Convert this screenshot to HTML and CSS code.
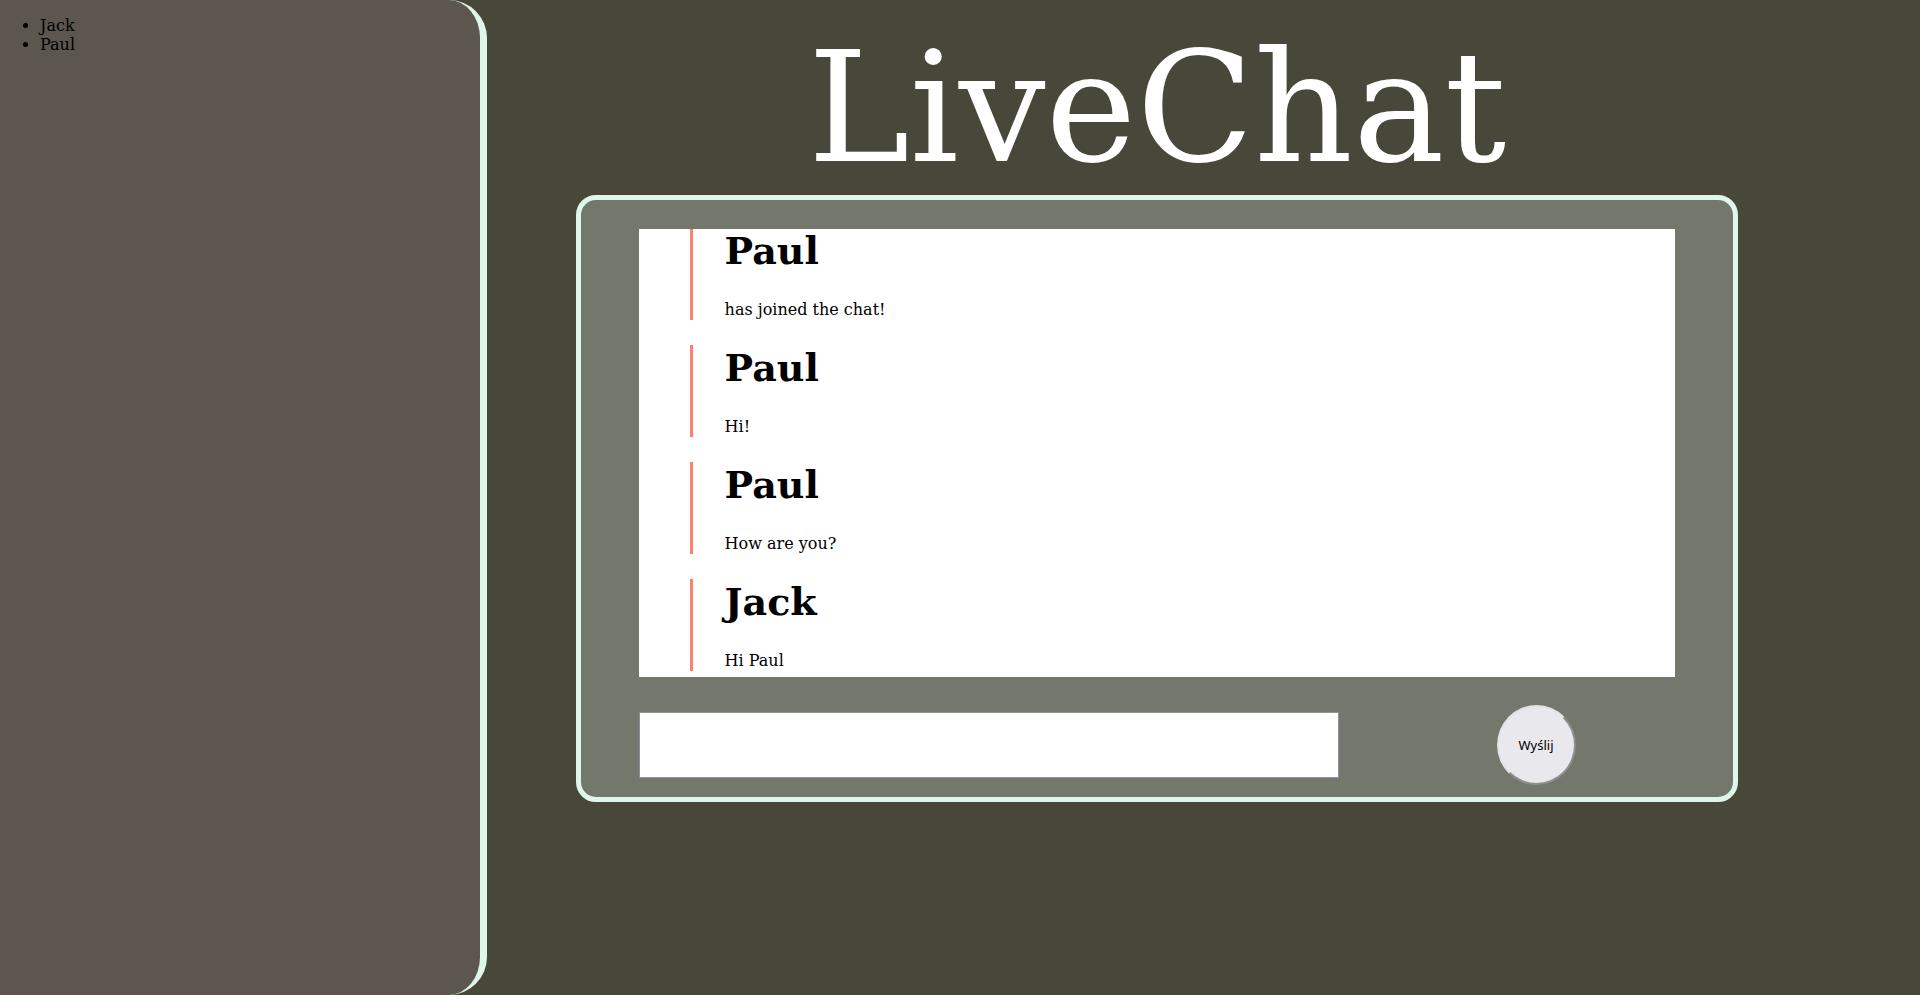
FILE: index.html
```html
<!DOCTYPE html>
<html lang="pl">
<head>
<meta charset="utf-8">
<title>LiveChat</title>
<link rel="stylesheet" href="styles.css">
</head>
<body>
<aside class="sidebar">
  <ul class="users">
    <li>Jack</li>
    <li>Paul</li>
  </ul>
</aside>
<main class="main">
  <header class="title">LiveChat</header>
  <section class="chat">
    <div class="messages">
      <article class="message"><h1>Paul</h1><p>has joined the chat!</p></article>
      <article class="message"><h1>Paul</h1><p>Hi!</p></article>
      <article class="message"><h1>Paul</h1><p>How are you?</p></article>
      <article class="message"><h1>Jack</h1><p>Hi Paul</p></article>
    </div>
    <form class="composer">
      <input class="field" type="text" aria-label="Wiadomość">
      <div class="actions"><button class="send" type="button">Wyślij</button></div>
    </form>
  </section>
</main>
</body>
</html>
```

FILE: styles.css
```css
* {
  box-sizing: border-box;
}

body {
  margin: 0;
  min-height: 100vh;
  display: flex;
  background: #48483a;
  color: #000;
  font: 16px/19px "DejaVu Serif", serif;
}

.sidebar {
  flex: none;
  width: calc(25% + 7px);
  background: #5c564f;
  border-right: 7px solid #dff7ea;
  border-radius: 0 38px 38px 0;
}

.users {
  margin: 16px 0;
  padding-left: 40px;
}

.main {
  flex: 1;
  min-width: 0;
  padding: 20px 182px 16px 89px;
}

.title {
  color: #fff;
  font-size: 8vw;
  line-height: 175px;
  text-align: center;
}

.chat {
  height: calc(60vh + 10px);
  display: flex;
  flex-direction: column;
  padding-top: 29px;
  background: #74776c;
  border: 5px solid #dff7ea;
  border-radius: 20px;
}

.messages {
  flex: none;
  height: 45vh;
  margin: 0 5%;
  display: flex;
  flex-direction: column;
  justify-content: flex-end;
  gap: 25px;
  padding: 0 51px 6px;
  overflow: hidden;
  background: #fff;
}

.message {
  flex: none;
  padding-left: 32px;
  border-left: 3px solid salmon;
}

.message h1 {
  margin: 0 0 26px;
  font-size: 38px;
  line-height: 46px;
}

.message p {
  margin: 0;
  line-height: 20px;
}

.composer {
  flex: 1;
  display: flex;
  align-items: center;
  padding: 16px 0 0 5%;
}

.field {
  width: 64%;
  height: 66px;
  padding: 2px 8px;
  border: 1px solid #8f8f9d;
  background: #fff;
  font: inherit;
}

.actions {
  flex: 1;
  display: flex;
  justify-content: center;
}

.send {
  width: 79px;
  height: 80px;
  padding: 0;
  border: 2px solid;
  border-color: #e3e3e3 #8f8f8f #8f8f8f #e3e3e3;
  border-radius: 50%;
  background: #e9e9ed;
  color: #000;
  font: 13px/18px "Noto Sans", sans-serif;
}
```
